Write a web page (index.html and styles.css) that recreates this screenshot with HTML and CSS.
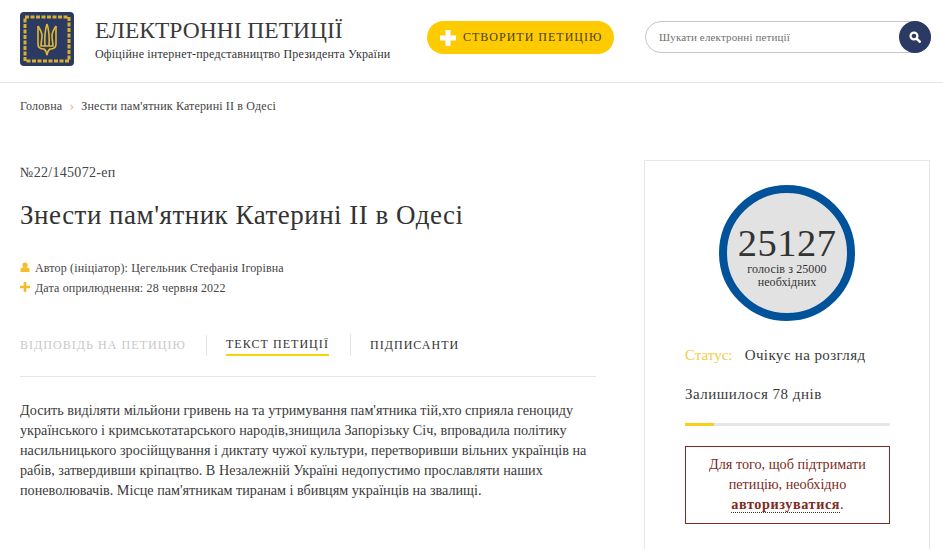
FILE: index.html
```html
<!DOCTYPE html>
<html lang="uk">
<head>
    <meta charset="UTF-8">
    <meta name="viewport" content="width=device-width, initial-scale=1.0">
    <title>Електронні петиції</title>
    <link rel="stylesheet" href="styles.css">
</head>
<body>
    <header class="site-header">
        <a class="logo" href="#">
            <svg class="logo-mark" viewBox="0 0 54 54" width="54" height="54" aria-hidden="true">
                <rect width="54" height="54" rx="4" fill="#2b3a63"/>
                <rect x="5" y="5" width="44" height="44" fill="none" stroke="#d9b02e" stroke-width="3" stroke-dasharray="4 1.500"/>
                <g fill="none" stroke="#e3b92f" stroke-width="1.600">
                    <path d="M27 12 C25 18 24.500 26 25 34 M27 12 C29 18 29.500 26 29 34"/>
                    <path d="M18 14 V32 C18 36 21 37 24 37 C25.500 38 26.500 40 27 43 C27.500 40 28.500 38 30 37 C33 37 36 36 36 32 V14"/>
                    <path d="M18 14 C20 17 22 20 22 24 C22 28 21 30 21 34 H33 C33 30 32 28 32 24 C32 20 34 17 36 14"/>
                </g>
            </svg>
            <span class="logo-text">
                <span class="logo-title">ЕЛЕКТРОННІ ПЕТИЦІЇ</span>
                <span class="logo-sub">Офіційне інтернет-представництво Президента України</span>
            </span>
        </a>
        <a class="create-btn" href="#">
            <svg viewBox="0 0 16 16" width="16" height="16" aria-hidden="true"><path d="M5.500 0h5v5.500H16v5h-5.500V16h-5v-5.500H0v-5h5.500z" fill="#fff"/></svg>
            СТВОРИТИ ПЕТИЦІЮ
        </a>
        <form class="search">
            <input class="search-input" type="text" placeholder="Шукати електронні петиції">
            <button class="search-btn" type="button" aria-label="Пошук">
                <svg viewBox="0 0 14 14" width="12" height="12" aria-hidden="true">
                    <circle cx="5.800" cy="5.800" r="4" fill="none" stroke="#fff" stroke-width="2.600"/>
                    <path d="M8.800 8.800 L12.500 12.500" stroke="#fff" stroke-width="3" stroke-linecap="round"/>
                </svg>
            </button>
        </form>
    </header>

    <nav class="breadcrumbs">
        <a href="#">Головна</a>
        <span class="crumb-sep">›</span>
        <span>Знести пам'ятник Катерині ІІ в Одесі</span>
    </nav>

    <main class="page">
        <section class="petition">
            <div class="petition-number">№22/145072-еп</div>
            <h1>Знести пам'ятник Катерині ІІ в Одесі</h1>

            <div class="meta">
                <div class="meta-row">
                    <svg viewBox="0 0 10 10" width="10" height="10" aria-hidden="true"><circle cx="5" cy="3" r="2.600" fill="#f5bd2a"/><path d="M0.500 10 V7.500 C0.500 6 2 5.500 3.500 5.200 H6.500 C8 5.500 9.500 6 9.500 7.500 V10 Z" fill="#f5bd2a"/></svg>
                    Автор (ініціатор): Цегельник Стефанія Ігорівна
                </div>
                <div class="meta-row">
                    <svg viewBox="0 0 10 10" width="10" height="10" aria-hidden="true"><path d="M3.700 0h2.600v3.700H10v2.600H6.300V10H3.700V6.300H0V3.700h3.700z" fill="#f5bd2a"/></svg>
                    Дата оприлюднення: 28 червня 2022
                </div>
            </div>

            <div class="tabs">
                <a class="tab disabled" href="#"><span>ВІДПОВІДЬ НА ПЕТИЦІЮ</span></a>
                <a class="tab active" href="#"><span>ТЕКСТ ПЕТИЦІЇ</span></a>
                <a class="tab" href="#"><span>ПІДПИСАНТИ</span></a>
            </div>

            <p class="petition-text">Досить виділяти мільйони гривень на та утримування пам'ятника тій,хто сприяла геноциду українського і кримськотатарського народів,знищила Запорізьку Січ, впровадила політику насильницького зросійщування і диктату чужої культури, перетворивши вільних українців на рабів, затвердивши кріпацтво. В Незалежній Україні недопустимо прославляти наших поневолювачів. Місце пам'ятникам тиранам і вбивцям українців на звалищі.</p>
        </section>

        <aside class="sidebar">
            <div class="votes">
                <div class="votes-count">25127</div>
                <div class="votes-label">голосів з 25000 необхідних</div>
            </div>
            <div class="status"><span class="status-label">Статус:</span> Очікує на розгляд</div>
            <div class="days-left">Залишилося 78 днів</div>
            <div class="progress"><div class="progress-fill" style="width: 14%"></div></div>
            <div class="auth-note">Для того, щоб підтримати петицію, необхідно <a href="#">авторизуватися</a>.</div>
        </aside>
    </main>
</body>
</html>
```

FILE: styles.css
```css
body {
    margin: 0;
    font-family: "Liberation Serif", serif;
    color: #333;
    background: #fff;
    overflow: hidden;
}
a {
    color: inherit;
    text-decoration: none;
}
.site-header {
    display: flex;
    align-items: center;
    height: 83px;
    padding: 0 12px 5px 20px;
    box-sizing: border-box;
    border-bottom: 1px solid #e6e6e6;
}
.logo {
    display: flex;
    align-items: center;
    gap: 21px;
    width: 407px;
}
.logo-mark {
    flex: none;
}
.logo-text {
    display: flex;
    flex-direction: column;
    gap: 3px;
}
.logo-title {
    font-size: 23.500px;
    line-height: 27px;
    color: #3a3a3a;
}
.logo-sub {
    font-size: 12px;
    line-height: 14px;
    letter-spacing: 0.18px;
    color: #333;
    white-space: nowrap;
}
.create-btn {
    display: flex;
    align-items: center;
    gap: 7px;
    width: 187px;
    height: 33px;
    box-sizing: border-box;
    margin-bottom: 2px;
    padding-left: 13px;
    border-radius: 17px;
    background: #fdcb00;
    color: #4a4020;
    font-size: 12px;
    letter-spacing: 1px;
}
.search {
    position: relative;
    width: 286px;
    height: 32px;
    margin-left: 31px;
    margin-bottom: 4px;
}
.search-input {
    width: 100%;
    height: 100%;
    box-sizing: border-box;
    padding: 0 40px 0 13px;
    border: 1px solid #c3c5cf;
    border-radius: 16px;
    font-family: inherit;
    font-size: 11px;
    letter-spacing: 0.15px;
    outline: none;
}
.search-input::placeholder {
    color: #6f6f6f;
    opacity: 1;
}
.search-btn {
    position: absolute;
    top: 0;
    right: 0;
    display: flex;
    align-items: center;
    justify-content: center;
    width: 32px;
    height: 32px;
    padding: 0;
    border: 0;
    border-radius: 50%;
    background: #2b3a63;
}
.breadcrumbs {
    display: flex;
    align-items: center;
    gap: 7px;
    padding: 15px 20px 0;
    font-size: 12px;
    line-height: 16px;
    letter-spacing: 0.15px;
    color: #444;
}
.crumb-sep {
    color: #efb877;
    font-size: 15px;
}
.page {
    display: grid;
    grid-template-columns: 576px 286px;
    gap: 48px;
    padding: 45px 0 0 20px;
}
.petition-number {
    margin-top: 4px;
    font-size: 14px;
    line-height: 20px;
    letter-spacing: 0.3px;
    color: #444;
}
h1 {
    margin: 16px 0 0;
    font-size: 27px;
    line-height: 32px;
    font-weight: 400;
    letter-spacing: 0.5px;
    color: #333;
}
.meta {
    margin-top: 27px;
    font-size: 12px;
    line-height: 20px;
    letter-spacing: 0.15px;
    color: #444;
}
.meta-row {
    display: flex;
    align-items: center;
    gap: 5px;
}
.meta-row svg {
    margin-top: -3px;
}
.tabs {
    display: flex;
    align-items: center;
    margin-top: 36px;
    padding-bottom: 20px;
    border-bottom: 1px solid #e6e6e6;
    font-size: 12px;
    letter-spacing: 1.050px;
    color: #333;
}
.tab {
    padding-right: 20px;
    margin-right: 19px;
    border-right: 1px solid #e6e6e6;
    line-height: 20px;
}
.tab:last-child {
    border-right: 0;
}
.tab span {
    display: inline-block;
    border-bottom: 1px solid transparent;
}
.tab.disabled {
    color: #c8c8c8;
}
.tab.active {
    padding-right: 21px;
}
.tab.active span {
    line-height: 19px;
    border-bottom: 2px solid #f5d60a;
}
.petition-text {
    margin: 23px 0 0;
    font-size: 14.200px;
    line-height: 20px;
    color: #3a3a3a;
}
.sidebar {
    height: 389px;
    box-sizing: border-box;
    padding: 24px 39px 0 40px;
    border: 1px solid #e6e6e6;
    border-bottom: 0;
    margin-top: 1px;
}
.votes {
    display: flex;
    flex-direction: column;
    align-items: center;
    width: 136px;
    height: 136px;
    box-sizing: border-box;
    margin: 0 0 0 34px;
    padding-top: 32px;
    border: 8px solid #00529b;
    border-radius: 50%;
    background: #e2e2e2;
    text-align: center;
}
.votes-count {
    font-size: 38.500px;
    line-height: 36px;
    letter-spacing: 0.5px;
    color: #333;
}
.votes-label {
    width: 100px;
    margin-top: 2px;
    font-size: 12px;
    line-height: 13px;
    letter-spacing: 0.1px;
    color: #333;
}
.status {
    margin-top: 24px;
    font-size: 15px;
    line-height: 20px;
    letter-spacing: 0.4px;
    color: #3a3a3a;
}
.status-label {
    margin-right: 8px;
    letter-spacing: 0;
    color: #f5cb45;
}
.days-left {
    margin-top: 19px;
    font-size: 15px;
    line-height: 20px;
    letter-spacing: 0.5px;
    color: #3a3a3a;
}
.progress {
    height: 3px;
    margin-top: 19px;
    background: #e6e6e6;
}
.progress-fill {
    height: 100%;
    background: #f8cf1c;
}
.auth-note {
    box-sizing: border-box;
    height: 78px;
    margin-top: 20px;
    padding: 7px 12px 0;
    border: 1px solid #7e2a22;
    font-size: 14.200px;
    line-height: 20px;
    text-align: center;
    color: #7e2a22;
}
.auth-note a {
    font-weight: 700;
    letter-spacing: 0.6px;
    border-bottom: 1px dotted #333;
}
```
